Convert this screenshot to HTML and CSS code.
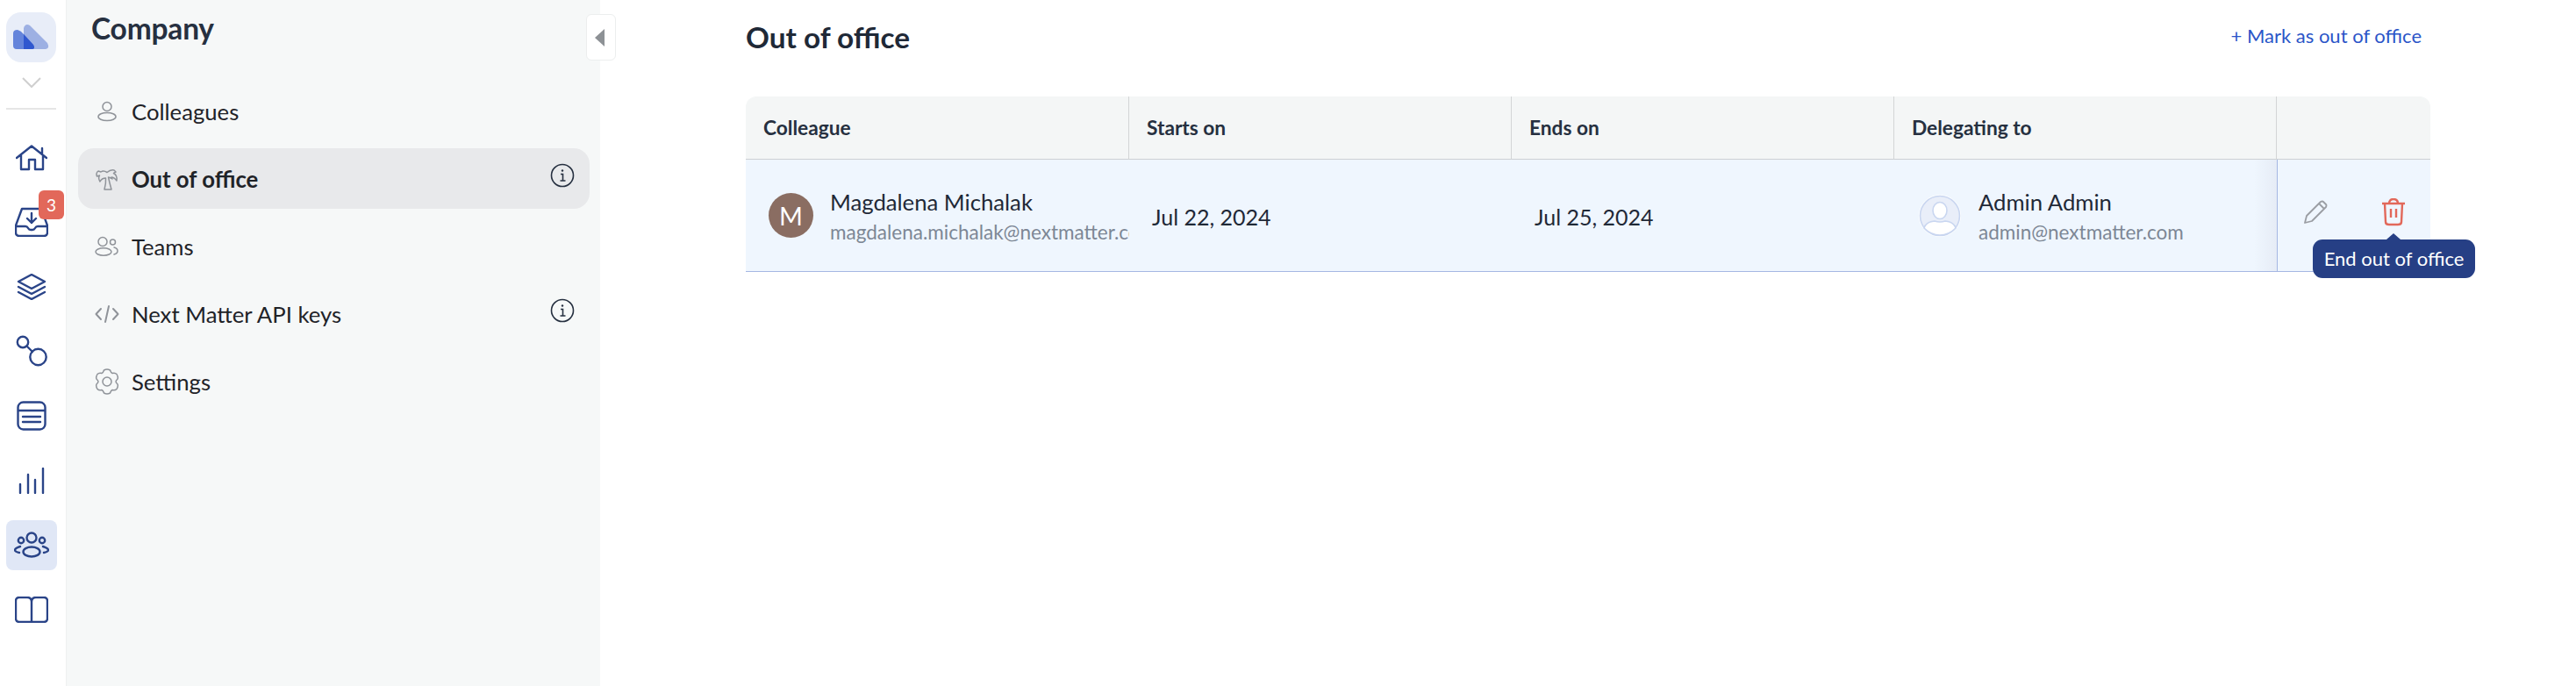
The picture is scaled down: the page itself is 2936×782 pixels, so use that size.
FILE: index.html
```html
<!DOCTYPE html>
<html lang="en">
<head>
<meta charset="utf-8">
<title>Out of office</title>
<link rel="stylesheet" href="styles.css">
</head>
<body>
<div class="app">
  <nav class="rail">
    <div class="logo">
      <svg viewBox="0 0 57 57" width="57" height="57">
        <path d="M20 18 Q22 12 27 15 L47 35 Q50 41 45 42 L24 42 Q20 42 20 38Z" fill="#9db0e3"/>
        <path d="M8 24 Q8 20 13 20 Q17 21 20 25 L31 37 Q34 42 29 42 L12 42 Q8 42 8 38Z" fill="#6484db"/>
        <path d="M20 25 L31 37 Q34 42 29 42 L20 42Z" fill="#2f57cf"/>
      </svg>
    </div>
    <svg class="chevron" viewBox="0 0 22 12" width="22" height="12"><path d="M1 1 L11 11 L21 1" fill="none" stroke="#cfcfcf" stroke-width="2"/></svg>
    <div class="divider"></div>
    <div class="rail-items">
      <a class="rail-item">
        <svg viewBox="0 0 36 30" width="36" height="30"><path d="M1 15 L18 1.5 L35 15 M30 4 V11 M6 12 V28 H15 V17 H22 V28 H31 V12" class="ri"/></svg>
      </a>
      <a class="rail-item">
        <svg viewBox="0 0 38 34" width="38" height="34"><path d="M8 2 H30 L37 21 V29 Q37 33 33 33 H5 Q1 33 1 29 V21Z M2 22 H12 Q14 22 15 24 Q16 26 18 26 H20 Q22 26 23 24 Q24 22 26 22 H36 M19 7 V18 M14 13 L19 18 L24 13" class="ri"/></svg>
        <span class="badge">3</span>
      </a>
      <a class="rail-item">
        <svg viewBox="0 0 34 30" width="34" height="30"><path d="M17 1 L32 9 L17 17 L2 9Z M2 15 L17 23 L32 15 M2 21 L17 29 L32 21" class="ri"/></svg>
      </a>
      <a class="rail-item">
        <svg viewBox="0 0 36 36" width="36" height="36"><circle cx="8" cy="8" r="6.2" class="ri"/><path d="M12.5 12.5 L19 19" class="ri"/><circle cx="25.5" cy="25" r="9.2" class="ri"/></svg>
      </a>
      <a class="rail-item">
        <svg viewBox="0 0 34 34" width="34" height="34"><rect x="1.5" y="1.5" width="31" height="31" rx="6" class="ri"/><path d="M2 11 H32 M7 18 H27 M7 24 H27" class="ri"/></svg>
      </a>
      <a class="rail-item">
        <svg viewBox="0 0 30 30" width="30" height="30"><path d="M2 29 V19 M11 29 V8 M19 29 V14 M28 29 V1" class="ri"/></svg>
      </a>
      <a class="rail-item active">
        <svg viewBox="0 0 40 30" width="40" height="30"><circle cx="20" cy="7" r="5.5" class="ri"/><circle cx="8" cy="10" r="3.2" class="ri"/><circle cx="32" cy="10" r="3.2" class="ri"/><ellipse cx="20" cy="23" rx="9.5" ry="5.5" class="ri"/><path d="M7 17 Q1 19 1 21 Q1 23 6 24 M33 17 Q39 19 39 21 Q39 23 34 24" class="ri"/></svg>
      </a>
      <a class="rail-item">
        <svg viewBox="0 0 38 30" width="38" height="30"><path d="M19 6 Q19 1 14 1 H5 Q1 1 1 5 V25 Q1 29 5 29 H33 Q37 29 37 25 V5 Q37 1 33 1 H24 Q19 1 19 6 V29" class="ri"/></svg>
      </a>
    </div>
  </nav>

  <aside class="side">
    <h2 class="side-title">Company</h2>
    <button class="collapse"><span class="tri"></span></button>
    <ul class="menu">
      <li class="menu-item">
        <svg class="mi" viewBox="0 0 28 24" width="28" height="24"><circle cx="14" cy="6.5" r="5"/><ellipse cx="14" cy="18" rx="10" ry="4.6"/></svg>
        <span>Colleagues</span>
      </li>
      <li class="menu-item current">
        <svg class="mi" viewBox="0 0 28 26" width="28" height="26"><path d="M11 25 Q13 18 12.5 12 Q8 12 6 16 Q3.5 12 5.5 9 L2.5 10 Q1 6 4 4 L7 5 Q10 3 14 5.5 Q18 2 22 3 L24 5 L21.5 6.5 Q26 9 25 15 Q22 11 19 11 L20 13 Q18 11.5 15.5 11 Q17 18 19 25Z"/></svg>
        <span>Out of office</span>
        <svg class="info" viewBox="0 0 28 28" width="28" height="28"><circle cx="14" cy="14" r="12.5"/><path d="M12 12.5 H14.5 V20 M11.5 20 H17.5"/><circle class="dot" cx="14" cy="8.5" r="1.2"/></svg>
      </li>
      <li class="menu-item">
        <svg class="mi" viewBox="0 0 28 24" width="28" height="24"><circle cx="9" cy="6.5" r="5"/><circle cx="20.5" cy="7" r="3"/><ellipse cx="10" cy="18" rx="9" ry="4.2"/><path d="M22 13 Q26 14 26 17 Q26 20 22 21"/></svg>
        <span>Teams</span>
      </li>
      <li class="menu-item">
        <svg class="mi code" viewBox="0 0 28 24" width="28" height="24"><path d="M7 6 L1.5 12 L7 18 M21 6 L26.5 12 L21 18 M16 3 L12 21"/></svg>
        <span>Next Matter API keys</span>
        <svg class="info" viewBox="0 0 28 28" width="28" height="28"><circle cx="14" cy="14" r="12.5"/><path d="M12 12.5 H14.5 V20 M11.5 20 H17.5"/><circle class="dot" cx="14" cy="8.5" r="1.2"/></svg>
      </li>
      <li class="menu-item">
        <svg class="mi" viewBox="0 0 28 30" width="28" height="30"><circle cx="14" cy="15" r="5"/><path d="M10.5 2 Q14 0 17.5 2 Q18.5 5 20 5.5 Q23 4.5 25 6.5 Q27 10 26 12 Q24 14 24 15 Q24 16 26 18 Q27 20 25 23.5 Q23 25.5 20 24.5 Q18.5 25 17.5 28 Q14 30 10.5 28 Q9.5 25 8 24.5 Q5 25.5 3 23.5 Q1 20 2 18 Q4 16 4 15 Q4 14 2 12 Q1 10 3 6.5 Q5 4.5 8 5.5 Q9.5 5 10.5 2Z"/></svg>
        <span>Settings</span>
      </li>
    </ul>
  </aside>

  <main class="main">
    <header class="head">
      <h1 class="title">Out of office</h1>
      <a class="mark">+ Mark as out of office</a>
    </header>
    <div class="table">
      <div class="th first">Colleague</div>
      <div class="th">Starts on</div>
      <div class="th">Ends on</div>
      <div class="th">Delegating to</div>
      <div class="th last"></div>

      <div class="td person">
        <span class="avatar">M</span>
        <div class="who">
          <div class="name">Magdalena Michalak</div>
          <div class="email">magdalena.michalak@nextmatter.com</div>
        </div>
      </div>
      <div class="td date">Jul 22, 2024</div>
      <div class="td date">Jul 25, 2024</div>
      <div class="td person delegate">
        <svg class="admin" viewBox="0 0 50 50" width="50" height="50">
          <circle cx="25" cy="25" r="24" fill="#fff"/>
          <circle cx="25" cy="25" r="22.5" fill="#e9eef9" stroke="#c9d6f0" stroke-width="1.6"/>
          <ellipse cx="25" cy="19" rx="8" ry="9.5" fill="#fff" stroke="#c9d6f0" stroke-width="1.6"/>
          <path d="M7 39 Q9 32 19 31 Q25 33 31 31 Q41 32 43 39 Q35 47 25 47 Q15 47 7 39Z" fill="#fff" stroke="#c9d6f0" stroke-width="1.6"/>
        </svg>
        <div class="who">
          <div class="name">Admin Admin</div>
          <div class="email">admin@nextmatter.com</div>
        </div>
      </div>
      <div class="td actions">
        <svg viewBox="0 0 28 28" width="28" height="28"><path d="M2 26 L4 18 L20 2 Q22 1 23 2 L26 5 Q27 6 26 8 L10 24Z M18 4 L24 10" fill="none" stroke="#9a9da3" stroke-width="1.8" stroke-linejoin="round"/></svg>
        <svg viewBox="0 0 28 32" width="28" height="32"><path d="M1 6 H27 M9 6 Q9 1 14 1 Q19 1 19 6 M4 6 L5 27 Q5 30 9 30 H19 Q23 30 23 27 L24 6 M11 12 V22 M17 12 V22" fill="none" stroke="#e2685a" stroke-width="2.4"/></svg>
        <div class="tip">End out of office</div>
      </div>
    </div>
  </main>
</div>
</body>
</html>
```
FILE: styles.css
```css
* { box-sizing: border-box; }
html, body { margin: 0; height: 100%; background: #fff; }
body { font-family: "Lato", "Liberation Sans", sans-serif; color: #1f2937; overflow: hidden; }

.app { display: flex; height: 782px; }

.rail {
  width: 76px; flex: none; display: flex; flex-direction: column; align-items: flex-start;
  padding: 14px 0 0 7px; border-right: 1px solid #eef0f0; background: #fff;
}
.logo { width: 57px; height: 57px; border-radius: 17px; background: #e8edf8; }
.chevron { display: block; margin: 17px 0 0 18px; }
.divider { width: 57px; height: 2px; background: #e6e6e6; margin-top: 23px; }
.rail-items { display: flex; flex-direction: column; gap: 16.67px; margin-top: 26px; }
.rail-item { position: relative; width: 58px; height: 57px; display: flex; align-items: center; justify-content: center; border-radius: 8px; }
.rail-item.active { background: #e0e7f6; }
.ri { fill: none; stroke: #2a4488; stroke-width: 2.4; stroke-linejoin: round; stroke-linecap: round; }
.badge {
  position: absolute; left: 37px; top: -8px; width: 29px; height: 33px; border-radius: 6px;
  background: #e2685a; color: #fff; font-size: 19px; line-height: 33px; text-align: center;
}

.side { position: relative; width: 608px; flex: none; background: #f6f8f8; padding: 0 12px 0 13px; }
.side-title { margin: 0 0 0 15px; height: 65px; font-size: 33.5px; font-weight: 700; line-height: 64px; color: #263040; letter-spacing: -0.2px; }
.collapse {
  position: absolute; left: 592px; top: 16px; width: 34px; height: 53px; padding: 0;
  background: #fff; border: 1px solid #eceeee; border-radius: 6px;
  display: flex; align-items: center; justify-content: center;
}
.tri { width: 0; height: 0; border-style: solid; border-width: 10px 11px 10px 0; border-color: transparent #8d9195 transparent transparent; margin-right: 3px; }

.menu { list-style: none; margin: 27px 0 0; padding: 0; display: flex; flex-direction: column; gap: 8px; }
.menu-item { height: 69px; display: flex; align-items: center; padding: 0 17px 0 19px; border-radius: 18px; font-size: 25.7px; color: #1f2328; }
.menu-item.current { background: #e8e9eb; font-weight: 700; }
.mi { flex: none; margin-right: 14px; fill: none; stroke: #8f9399; stroke-width: 1.5; stroke-linejoin: round; stroke-linecap: round; }
.mi.code { stroke-width: 2; }
.info { flex: none; margin: 0 0 7px auto; fill: none; stroke: #263040; stroke-width: 1.6; }
.info .dot { fill: #263040; stroke: none; }

.main { flex: 1; padding: 0 166px; min-width: 0; }
.head { height: 84px; display: flex; align-items: center; justify-content: space-between; padding: 0 10px 1px 0; margin-bottom: 26px; }
.title { margin: 0; font-size: 33.3px; font-weight: 700; color: #1f2937; }
.mark { font-size: 22px; color: #2b55c8; margin-bottom: 2px; }

.table { display: grid; grid-template-columns: 437px 436px 436px 436px 175px; }
.th {
  height: 72px; background: #f4f6f6; border-bottom: 1px solid #cdd0d3; border-right: 1px solid #d3d5d6;
  padding-left: 20px; display: flex; align-items: center; font-size: 22.7px; font-weight: 700; color: #263040;
}
.th.first { border-top-left-radius: 12px; }
.th.last { border-right: 0; border-top-right-radius: 12px; }
.td { height: 128px; background: #eff6fe; border-bottom: 1px solid #a5b7e3; display: flex; align-items: center; min-width: 0; font-size: 25px; color: #1f2937; }
.date { padding: 2px 0 0 26px; }
.person { padding-left: 26px; overflow: hidden; }
.avatar { width: 51px; height: 51px; flex: none; border-radius: 50%; background: #8a6d62; color: #fff; font-size: 29px; line-height: 51px; text-align: center; }
.who { margin-left: 19px; padding-top: 4px; min-width: 0; white-space: nowrap; }
.name { font-size: 25.7px; line-height: 32px; color: #1f2937; }
.email { font-size: 22.5px; line-height: 32px; margin-top: 3px; color: #7d8795; }
.delegate { padding-left: 27px; background: linear-gradient(to left, #e6ecf6, #eff6fe 26px); }
.admin { flex: none; }
.delegate .who { margin-left: 19px; }
.actions { position: relative; border-left: 1px solid #a5b7e3; gap: 61px; padding: 0 0 8px 29px; }
.tip {
  position: absolute; left: 40px; top: 91px; width: 185px; height: 44px; border-radius: 11px;
  background: #263f85; color: #fff; font-size: 22px; line-height: 44px; text-align: center; white-space: nowrap;
}
.tip::before {
  content: ""; position: absolute; left: 84px; top: -7px; width: 0; height: 0;
  border-style: solid; border-width: 0 8px 7px; border-color: transparent transparent #263f85;
}
```
